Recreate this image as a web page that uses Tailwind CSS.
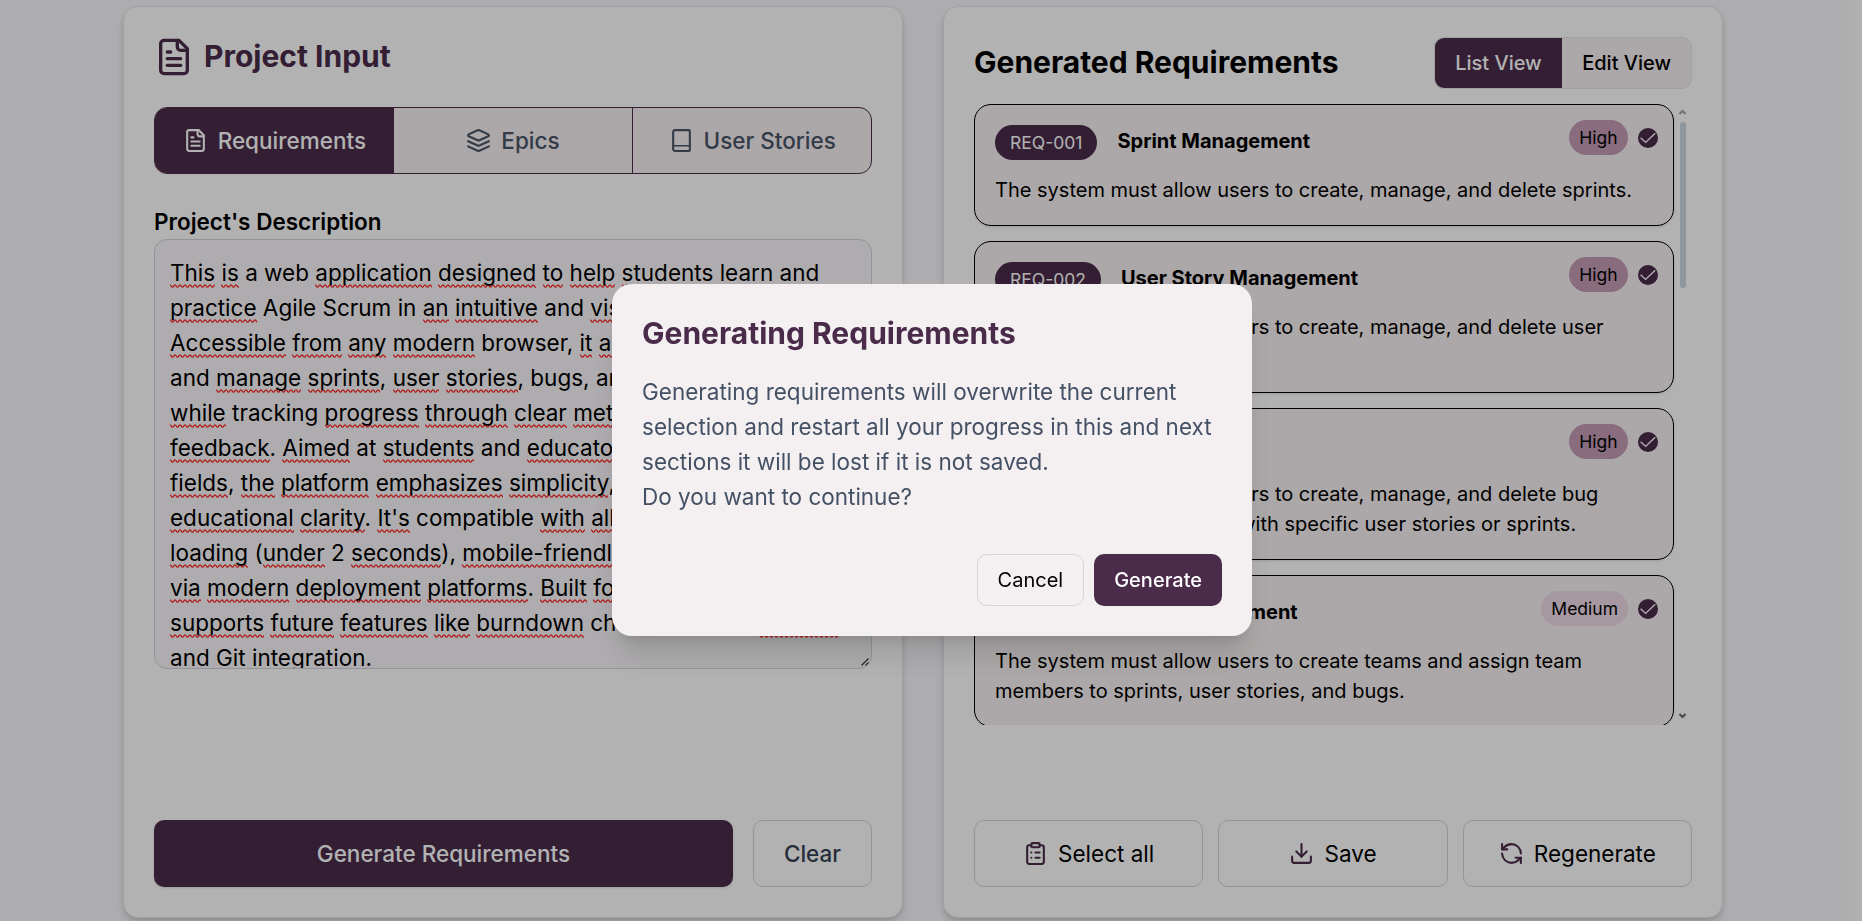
<!DOCTYPE html>
<html lang="en">
<head>
<meta charset="utf-8">
<title>Project Input</title>
<script src="https://cdn.jsdelivr.net/npm/@tailwindcss/browser@4"></script>
</head>
<body class="h-[921px] overflow-hidden bg-[#f8f8fb] font-['Inter',sans-serif] text-black">
<svg class="hidden">
  <defs>
    <g id="file" fill="none" stroke="currentColor" stroke-width="2" stroke-linecap="round" stroke-linejoin="round"><path d="M15 2H6a2 2 0 0 0-2 2v16a2 2 0 0 0 2 2h12a2 2 0 0 0 2-2V7Z"/><path d="M14 2v4a2 2 0 0 0 2 2h4"/><path d="M10 9H8"/><path d="M16 13H8"/><path d="M16 17H8"/></g>
    <g id="check"><circle cx="10" cy="10" r="10" fill="#4a2b4a"/><path d="M2.6 9.8 7.6 14.4 17.2 5.2" fill="none" stroke="#fff" stroke-width="1.4"/></g>
  </defs>
</svg>

<div class="flex h-full">
  <main class="flex h-full min-w-0 flex-1 justify-center pt-[6px] pr-px">
    <div class="grid h-[912px] w-[1600px] grid-cols-2 gap-10">

      <section class="flex flex-col rounded-[15px] border border-gray-200 bg-white p-[30px] shadow-[0_5px_8px_-1px_rgba(0,0,0,0.14),0_2px_5px_-2px_rgba(0,0,0,0.14)]">
        <div class="flex h-10 items-center gap-[10px] text-[#4a2b4a]">
          <svg class="size-10" viewBox="0 0 24 24"><use href="#file"/></svg>
          <h1 class="pb-[2px] text-[30px] leading-[38px] font-bold">Project Input</h1>
        </div>

        <div class="mt-[30px] grid h-[67px] grid-cols-3 overflow-hidden rounded-[13px] border border-[#4a2b4a] bg-[#f6eff3] text-[22.5px] leading-[35px] font-medium text-[#4a5565]">
          <div class="flex items-center justify-center gap-[10px] bg-[#4a2b4a] text-white"><svg class="size-[25px]" viewBox="0 0 24 24"><use href="#file"/></svg>Requirements</div>
          <div class="flex items-center justify-center gap-[10px]"><svg class="size-[25px]" viewBox="0 0 24 24" fill="none" stroke="currentColor" stroke-width="2" stroke-linecap="round" stroke-linejoin="round"><path d="m12.83 2.18a2 2 0 0 0-1.66 0L2.6 6.08a1 1 0 0 0 0 1.83l8.58 3.91a2 2 0 0 0 1.66 0l8.58-3.9a1 1 0 0 0 0-1.83Z"/><path d="m22 17.65-9.17 4.16a2 2 0 0 1-1.66 0L2 17.65"/><path d="m22 12.65-9.17 4.16a2 2 0 0 1-1.66 0L2 12.65"/></svg>Epics</div>
          <div class="flex items-center justify-center gap-[10px] border-l border-[#4a2b4a]"><svg class="size-[25px]" viewBox="0 0 24 24" fill="none" stroke="currentColor" stroke-width="2" stroke-linecap="round" stroke-linejoin="round"><path d="M4 19.5V4a2 2 0 0 1 2-2h13a1 1 0 0 1 1 1v18a1 1 0 0 1-1 1H6a2 2 0 0 1-2-2.5"/><path d="M4 17h16" stroke-width="1.4"/></svg>User Stories</div>
        </div>

        <h2 class="mt-[30px] text-[22.5px] leading-[35px] font-semibold">Project's Description</h2>
        <div class="relative h-[430px] overflow-hidden rounded-[13px] border border-[#d1d5db] bg-[#f9f7f9] px-[15px] pt-[15px] text-[22.5px] leading-[35px] whitespace-nowrap **:[u]:bg-[url('data:image/svg+xml,%3Csvg%20xmlns=%22http://www.w3.org/2000/svg%22%20width=%225%22%20height=%224%22%3E%3Cpath%20d=%22M-2.5%203.2C-1.3%203.2-1.2%20.8%200%20.8S1.3%203.2%202.5%203.2%203.8%20.8%205%20.8%206.3%203.2%207.5%203.2%22%20fill=%22none%22%20stroke=%22%23ff1a1a%22%20stroke-width=%221.3%22/%3E%3C/svg%3E')] **:[u]:bg-bottom-left **:[u]:bg-repeat-x **:[u]:pb-[2px] **:[u]:no-underline">
          <p><u>This</u> <u>is</u> a web <u>application</u> <u>designed</u> <u>to</u> <u>help</u> <u>students</u> <u>learn</u> and</p>
          <p><u>practice</u> Agile Scrum in <u>an</u> <u>intuitive</u> and <u>visual</u> <u>way</u>.</p>
          <p><u>Accessible</u> <u>from</u> <u>any</u> <u>modern</u> browser, <u>it</u> <u>allows</u> <u>users</u> <u>to</u> plan</p>
          <p>and <u>manage</u> <u>sprints</u>, <u>user</u> <u>stories</u>, bugs, and <u>teams</u>,</p>
          <p><u>while</u> tracking <u>progress</u> <u>through</u> <u>clear</u> <u>metrics</u> and</p>
          <p><u>feedback</u>. <u>Aimed</u> at <u>students</u> and <u>educators</u> in <u>tech</u></p>
          <p><u>fields</u>, <u>the</u> <u>platform</u> <u>emphasizes</u> <u>simplicity</u>, <u>speed</u>, and</p>
          <p><u>educational</u> <u>clarity</u>. <u>It's</u> compatible <u>with</u> <u>all</u> <u>devices</u>, <u>fast</u></p>
          <p><u>loading</u> (<u>under</u> 2 <u>seconds</u>), <u>mobile-friendly</u>, and <u>secure</u></p>
          <p><u>via</u> <u>modern</u> <u>deployment</u> <u>platforms</u>. <u>Built</u> <u>for</u> <u>growth</u>, <u>it</u></p>
          <p><u>supports</u> <u>future</u> <u>features</u> <u>like</u> <u>burndown</u> charts, velocity <u>metrics</u>,</p>
          <p>and Git <u>integration</u>.</p>
          <svg class="absolute right-[2px] bottom-[2px] size-[8px]" viewBox="0 0 8 8" fill="none" stroke="#333" stroke-width="1.2"><path d="M.5 7.5 7.5.5M4.5 7.5 7.5 4.5"/></svg>
        </div>

        <div class="mt-auto flex h-[67px] gap-5 text-[22.5px] leading-[35px] font-medium">
          <div class="flex flex-1 items-center justify-center rounded-[10px] bg-[#4a2b4a] text-white shadow-sm">Generate Requirements</div>
          <div class="flex items-center rounded-[10px] border border-[#d1d5db] px-[30px] text-[#364153]">Clear</div>
        </div>
      </section>

      <section class="flex flex-col rounded-[15px] border border-gray-200 bg-white p-[30px] shadow-[0_5px_8px_-1px_rgba(0,0,0,0.14),0_2px_5px_-2px_rgba(0,0,0,0.14)]">
        <div class="flex h-[52px] items-center justify-between">
          <h1 class="pb-[2px] text-[30px] leading-[38px] font-bold">Generated Requirements</h1>
          <div class="flex overflow-hidden rounded-[10px] border border-gray-200 bg-[#f6eff3] text-[20px] leading-[30px] font-medium">
            <div class="bg-[#4a2b4a] px-[20.5px] py-[10px] text-white">List View</div>
            <div class="px-5 py-[10px]">Edit View</div>
          </div>
        </div>

        <div class="mt-[15px] flex h-[621px] overflow-hidden">
          <div class="flex w-[700px] flex-col gap-[15px] text-[20px] leading-[30px]">
            <article class="relative h-[122px] shrink-0 rounded-[17px] border border-black bg-[#f6f0f1] p-5 shadow-sm">
              <div class="flex h-[35px] gap-5"><span class="rounded-full bg-[#4a2b4a] px-[15px] py-[5px] text-[17.5px] leading-[25px] text-white">REQ-001</span><h3 class="pt-px font-bold">Sprint Management</h3></div>
              <p class="mt-[15px]">The system must allow users to create, manage, and delete sprints.</p>
              <div class="absolute top-[15px] right-[15px] flex items-center gap-[10px] text-[17.5px] leading-[25px]"><span class="rounded-full bg-[#c49db5] px-[10.5px] py-[5px]">High</span><svg class="size-5" viewBox="0 0 20 20"><use href="#check"/></svg></div>
            </article>
            <article class="relative h-[152px] shrink-0 rounded-[17px] border border-black bg-[#f6f0f1] p-5 shadow-sm">
              <div class="flex h-[35px] gap-5"><span class="rounded-full bg-[#4a2b4a] px-[15px] py-[5px] text-[17.5px] leading-[25px] text-white">REQ-002</span><h3 class="pt-px font-bold">User Story Management</h3></div>
              <p class="mt-[15px]">The system must allow users to create, manage, and delete user stories.</p>
              <div class="absolute top-[15px] right-[15px] flex items-center gap-[10px] text-[17.5px] leading-[25px]"><span class="rounded-full bg-[#c49db5] px-[10.5px] py-[5px]">High</span><svg class="size-5" viewBox="0 0 20 20"><use href="#check"/></svg></div>
            </article>
            <article class="relative h-[152px] shrink-0 rounded-[17px] border border-black bg-[#f6f0f1] p-5 shadow-sm">
              <div class="flex h-[35px] gap-5"><span class="rounded-full bg-[#4a2b4a] px-[15px] py-[5px] text-[17.5px] leading-[25px] text-white">REQ-003</span><h3 class="pt-px font-bold">Bug Tracking</h3></div>
              <p class="mt-[15px]">The system must allow users to create, manage, and delete bug<br>reports, and assign them <span class="ml-1">with specific user stories or sprints.</span></p>
              <div class="absolute top-[15px] right-[15px] flex items-center gap-[10px] text-[17.5px] leading-[25px]"><span class="rounded-full bg-[#c49db5] px-[10.5px] py-[5px]">High</span><svg class="size-5" viewBox="0 0 20 20"><use href="#check"/></svg></div>
            </article>
            <article class="relative h-[152px] shrink-0 rounded-[17px] border border-black bg-[#f6f0f1] p-5 shadow-sm">
              <div class="flex h-[35px] gap-5"><span class="rounded-full bg-[#4a2b4a] px-[15px] py-[5px] text-[17.5px] leading-[25px] text-white">REQ-004</span><h3 class="pt-px font-bold">Team Assignment</h3></div>
              <p class="mt-[15px]">The system must allow users to create teams and assign team<br>members to sprints, user stories, and bugs.</p>
              <div class="absolute top-[15px] right-[15px] flex items-center gap-[10px] text-[17.5px] leading-[25px]"><span class="rounded-full bg-[#eddae6] px-[10px] py-[5px]">Medium</span><svg class="size-5" viewBox="0 0 20 20"><use href="#check"/></svg></div>
            </article>
          </div>
          <div class="ml-[5px] flex w-[7px] flex-col items-center pt-[5px] pb-[6px]">
            <svg class="h-[6px] w-[7px]" viewBox="0 0 7 6" fill="none" stroke="#a3a3a3" stroke-width="2"><path d="M.5 5 3.5 2 6.5 5"/></svg>
            <div class="mt-[7px] ml-px h-[166px] w-[6px] rounded-full bg-[#cbd8e1]"></div>
            <svg class="mt-auto h-[6px] w-[7px]" viewBox="0 0 7 6" fill="none" stroke="#6b6b6b" stroke-width="2"><path d="M.5 1 3.5 4 6.5 1"/></svg>
          </div>
        </div>

        <div class="mt-auto grid h-[67px] grid-cols-3 gap-[15px] text-[22.5px] leading-[35px]">
          <div class="flex items-center justify-center gap-[10px] rounded-[10px] border border-[#d1d5db]"><svg class="size-[25px] text-[#4a2b4a]" viewBox="0 0 24 24" fill="none" stroke="currentColor" stroke-width="2" stroke-linecap="round" stroke-linejoin="round"><rect x="8" y="2" width="8" height="4" rx="1"/><path d="M16 4h2a2 2 0 0 1 2 2v14a2 2 0 0 1-2 2H6a2 2 0 0 1-2-2V6a2 2 0 0 1 2-2h2"/><path d="M12 11h4"/><path d="M12 16h4"/><path d="M8 11h.01"/><path d="M8 16h.01"/></svg>Select all</div>
          <div class="flex items-center justify-center gap-[10px] rounded-[10px] border border-[#d1d5db]"><svg class="size-[25px] text-[#4a2b4a]" viewBox="0 0 24 24" fill="none" stroke="currentColor" stroke-width="2" stroke-linecap="round" stroke-linejoin="round"><path d="M21 15v4a2 2 0 0 1-2 2H5a2 2 0 0 1-2-2v-4"/><path d="m7 10 5 5 5-5"/><path d="M12 15V3"/></svg>Save</div>
          <div class="flex items-center justify-center gap-[10px] rounded-[10px] border border-[#d1d5db]"><svg class="size-[25px] text-[#4a2b4a]" viewBox="0 0 24 24" fill="none" stroke="currentColor" stroke-width="2" stroke-linecap="round" stroke-linejoin="round"><path d="M21 12a9 9 0 0 0-9-9 9.75 9.75 0 0 0-6.74 2.74L3 8"/><path d="M3 3v5h5"/><path d="M3 12a9 9 0 0 0 9 9 9.75 9.75 0 0 0 6.74-2.74L21 16"/><path d="M16 16h5v5"/></svg>Regenerate</div>
        </div>
      </section>
    </div>
  </main>
  <div class="w-[15px] bg-[#fcfcfc]"></div>
</div>

<div class="fixed inset-0 flex items-center justify-center bg-black/30 pb-px pl-[2px]">
  <div class="h-[352px] w-[640px] rounded-[20px] bg-[#f4f0f2] p-[30px] shadow-[0_25px_31px_-6px_rgba(0,0,0,0.12),0_10px_12px_-7px_rgba(0,0,0,0.12)]">
    <h2 class="pb-[2px] text-[30px] leading-[38px] font-bold text-[#4a2b4a]">Generating Requirements</h2>
    <p class="mt-5 text-[22.5px] leading-[35px] text-[#445064]">Generating requirements will overwrite the current<br>selection and restart all your progress in this and next<br>sections it will be lost if it is not saved.<br>Do you want to continue?</p>
    <div class="mt-10 flex justify-end gap-[10px] text-[20px] leading-[30px]">
      <div class="rounded-[10px] border border-[#d1d5db] px-5 py-[10px]">Cancel</div>
      <div class="rounded-[10px] bg-[#4a2b4a] px-5 py-[11px] font-medium text-white">Generate</div>
    </div>
  </div>
</div>
</body>
</html>
